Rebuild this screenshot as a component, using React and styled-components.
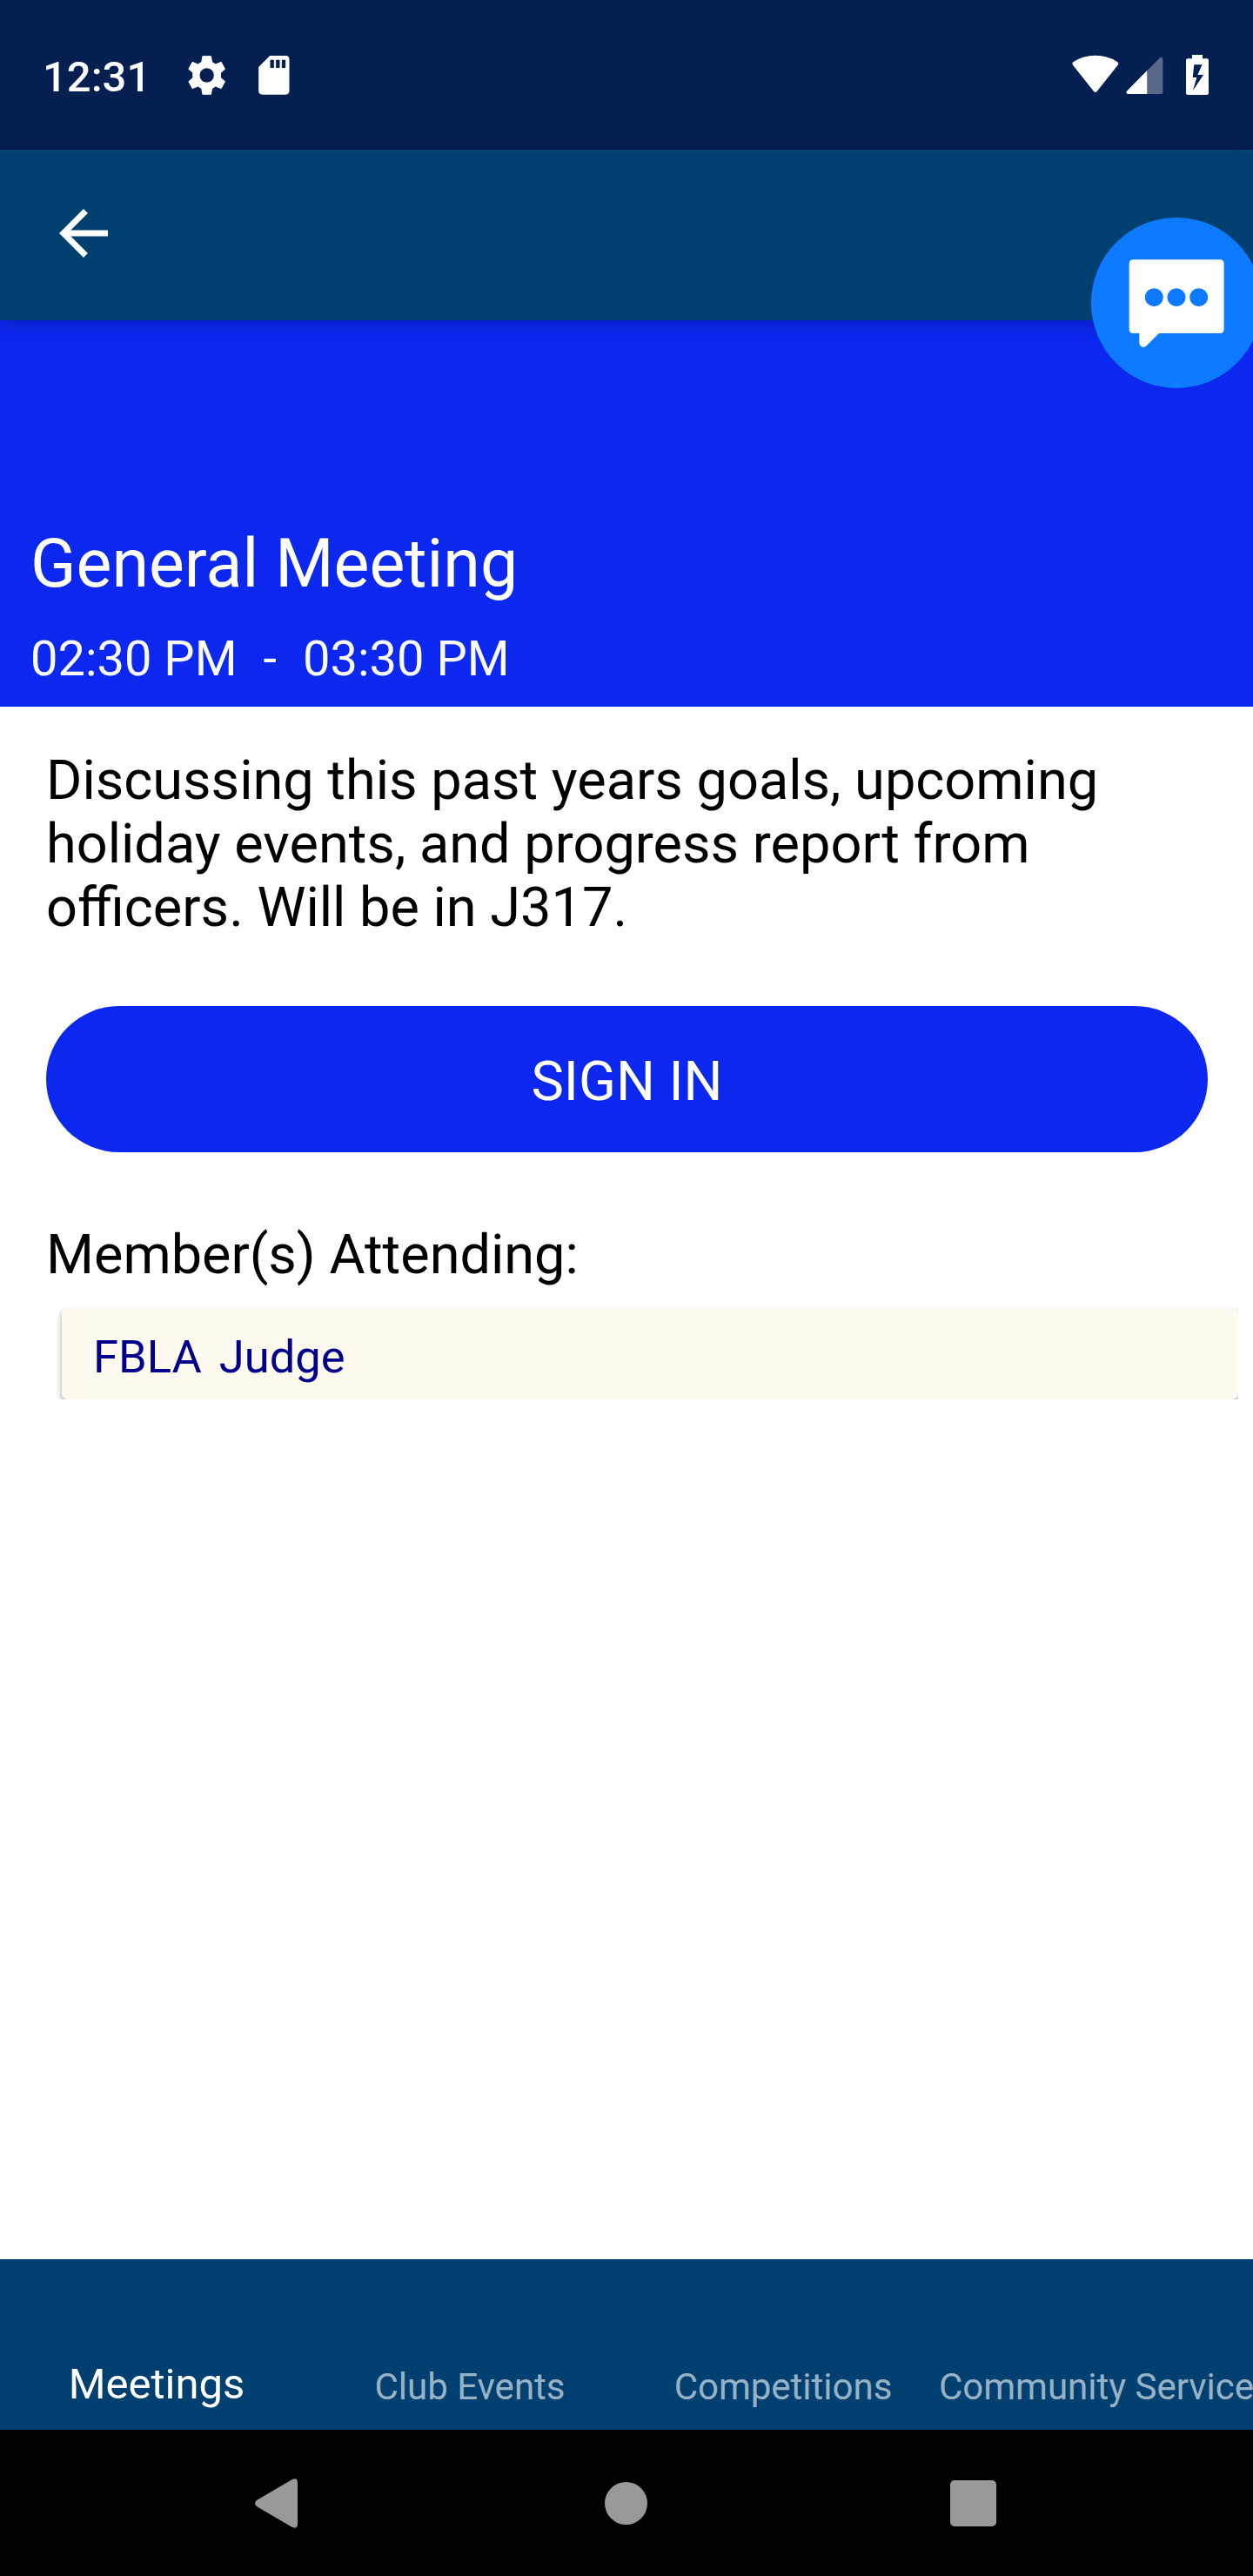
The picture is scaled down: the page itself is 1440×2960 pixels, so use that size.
import React from 'react';
import styled, { createGlobalStyle } from 'styled-components';

const GlobalStyle = createGlobalStyle`
  * { box-sizing: border-box; }
  body { margin: 0; background: #fff; }
  button { border: 0; padding: 0; background: none; font: inherit; color: inherit; }
`;

const Screen = styled.div`
  position: relative;
  display: flex;
  flex-direction: column;
  width: 1440px;
  height: 2960px;
  overflow: hidden;
  background: #fff;
  font-family: Roboto, 'Noto Sans', sans-serif;
  color: #000;
`;

const Icon = styled.svg`
  display: block;
  flex: none;
  width: ${(p) => p.$w}px;
  height: ${(p) => p.$h}px;
`;

const StatusBar = styled.div`
  flex: none;
  display: flex;
  align-items: center;
  justify-content: space-between;
  height: 172px;
  padding: 0 51px 0 49px;
  background: #051f50;
  color: #fff;
`;

const StatusGroup = styled.div`
  display: flex;
  align-items: center;
`;

const Clock = styled.span`
  width: 167px;
  font-size: 49px;
  font-weight: 500;
  line-height: 58px;
  padding-top: 5px;
`;

const StatusIcon = styled(Icon)`
  margin-left: ${(p) => p.$gap || 0}px;
`;

const Toolbar = styled.header`
  flex: none;
  position: relative;
  z-index: 1;
  display: flex;
  align-items: center;
  height: 196px;
  padding: 0 54px 4px;
  background: #004071;
  box-shadow: 0 4px 22px rgba(0, 0, 0, 0.2);
`;

const ChatBubble = styled.button`
  position: absolute;
  z-index: 2;
  top: 250px;
  right: -10px;
  display: flex;
  justify-content: center;
  width: 196px;
  height: 196px;
  padding-top: 48px;
  border-radius: 50%;
  background: #0e7aff;
`;

const Hero = styled.section`
  flex: none;
  display: flex;
  flex-direction: column;
  justify-content: flex-end;
  gap: 31px;
  height: 444px;
  padding: 0 35px 22px;
  background: #0c27ee;
  color: #fff;
`;

const Title = styled.h1`
  margin: 0;
  font-size: 77.1px;
  font-weight: 400;
  line-height: 90px;
`;

const Time = styled.div`
  display: flex;
  gap: 30px;
  font-size: 56px;
  line-height: 66px;
  color: #f8f8ff;
`;

const Content = styled.main`
  flex: 1;
  display: flex;
  flex-direction: column;
  padding: 48px 17px 0 53px;
`;

const Description = styled.p`
  width: 1335px;
  margin: 0;
  font-size: 63.07px;
  line-height: 73px;
`;

const SignIn = styled.button`
  flex: none;
  width: 1335px;
  height: 168px;
  margin-top: 77px;
  padding-top: 5px;
  border-radius: 84px;
  background: #0c27ee;
  color: #fff;
  font-size: 63px;
  line-height: 74px;
`;

const SectionTitle = styled.h2`
  margin: 81px 0 0;
  font-size: 63px;
  font-weight: 400;
  line-height: 74px;
`;

const MemberList = styled.div`
  margin-top: 24px;
  padding-left: 18px;
  overflow: hidden;
`;

const MemberCard = styled.div`
  display: flex;
  gap: 20px;
  height: 105px;
  padding: 25px 36px 0;
  border-radius: 7px;
  background: #fffaf0;
  box-shadow: 0 3px 7px rgba(0, 0, 0, 0.35);
  color: #00008b;
  font-size: 52.5px;
  line-height: 62px;
`;

const Tabs = styled.nav`
  flex: none;
  display: grid;
  grid-template-columns: repeat(4, 360px);
  align-items: end;
  height: 196px;
  padding-bottom: 23px;
  background: #004071;
`;

const Tab = styled.button`
  display: flex;
  justify-content: center;
  font-size: ${(p) => (p.$active ? 49 : 42)}px;
  line-height: ${(p) => (p.$active ? 58 : 53)}px;
  color: ${(p) => (p.$active ? '#fff' : 'rgba(255, 255, 255, 0.6)')};
  white-space: nowrap;
`;

const SystemNav = styled.div`
  flex: none;
  display: flex;
  align-items: center;
  height: 168px;
  padding-left: 293px;
  background: #000;
`;

const NavIcon = styled(Icon)`
  margin-right: ${(p) => p.$after || 0}px;
`;

const tabs = ['Meetings', 'Club Events', 'Competitions', 'Community Service'];

export default function App() {
  return (
    <Screen>
      <GlobalStyle />
      <StatusBar>
        <StatusGroup>
          <Clock>12:31</Clock>
          <StatusIcon $w={43} $h={45} viewBox="647.5 192 129 135">
            <path
              fill="#fff"
              fillRule="evenodd"
              stroke="#fff"
              strokeWidth="3"
              strokeLinejoin="round"
              d="M698 194h29l3 20 13 8 19-8 13 24-15 13v17l15 13-13 24-19-8-13 8-3 20h-29l-3-20-13-8-19 8-13-24 15-13v-17l-15-13 13-24 19 8 13-8zM712.500 233.500a26 26 0 1 0 0 52a26 26 0 1 0 0-52z"
            />
          </StatusIcon>
          <StatusIcon $gap={37.5} $w={36} $h={45} viewBox="889.500 192 108 135">
            <path
              fill="#fff"
              fillRule="evenodd"
              d="M929 192h54q13 0 13 13v108q0 13-13 13h-80q-13 0-13-13v-82zM930 206v28h13v-28zM950 206v28h13v-28zM970 206v28h13v-28z"
            />
          </StatusIcon>
        </StatusGroup>
        <StatusGroup>
          <StatusIcon $w={54} $h={46} viewBox="155 189 162 138">
            <path
              fill="#fff"
              d="M158 224q-4-6 1-10q32-23 76.500-23t76.500 23q5 4 1 10l-72 91q-5.500 6-11 0z"
            />
          </StatusIcon>
          <StatusIcon $gap={8} $w={43} $h={46} viewBox="341 189 129 138">
            <path fill="#596788" d="M414 243l43-43q4-4 8-2q3 2 3 6v114q0 6-6 6h-48z" />
            <path fill="#fff" d="M414 243v81h-66q-6 0-6-5q0-3 3-6z" />
          </StatusIcon>
          <StatusIcon $gap={26} $w={26} $h={46} viewBox="549 189 78 138">
            <path
              fill="#fff"
              fillRule="evenodd"
              d="M570 189h36v13h15q6 0 6 6v113q0 6-6 6h-66q-6 0-6-6v-113q0-6 6-6h15zM577 223l-5 44h14l-13 45 36-54h-20l16-35z"
            />
          </StatusIcon>
        </StatusGroup>
      </StatusBar>

      <Toolbar>
        <Icon $w={84} $h={84} viewBox="0 0 24 24">
          <path
            fill="#fff"
            d="M20 11H7.830l5.590-5.590L12 4l-8 8 8 8 1.410-1.410L7.830 13H20z"
          />
        </Icon>
      </Toolbar>

      <Hero>
        <Title>General Meeting</Title>
        <Time>
          <span>02:30 PM</span>
          <span>-</span>
          <span>03:30 PM</span>
        </Time>
      </Hero>

      <Content>
        <Description>
          Discussing this past years goals, upcoming holiday events, and progress report from
          officers. Will be in J317.
        </Description>
        <SignIn>SIGN IN</SignIn>
        <SectionTitle>Member(s) Attending:</SectionTitle>
        <MemberList>
          <MemberCard>
            <span>FBLA</span>
            <span>Judge</span>
          </MemberCard>
        </MemberList>
      </Content>

      <Tabs>
        {tabs.map((name, i) => (
          <Tab key={name} $active={i === 0}>
            {name}
          </Tab>
        ))}
      </Tabs>

      <SystemNav>
        <NavIcon $w={49} $h={57} $after={353} viewBox="0 0 49 57">
          <path fill="#999" d="M2 25L42 1.500Q49-2 49 5V52Q49 59 42 55.500L2 32Q-2 28.500 2 25z" />
        </NavIcon>
        <NavIcon $w={49} $h={49} $after={347.5} viewBox="0 0 49 49">
          <circle cx="24.500" cy="24.500" r="24.500" fill="#999" />
        </NavIcon>
        <NavIcon $w={53} $h={53} viewBox="0 0 53 53">
          <rect width="53" height="53" rx="5" fill="#999" />
        </NavIcon>
      </SystemNav>

      <ChatBubble aria-label="Chat">
        <Icon $w={110} $h={102} viewBox="352 893 330 306">
          <path
            fill="#fff"
            d="M368 894h299q14 0 14 14v226q0 14-14 14H457l-43 43q-8 8-17 3q-8-4-8-13v-33h-21q-14 0-14-14V908q0-14 14-14z"
          />
          <circle cx="440" cy="1024" r="31.500" fill="#0e7aff" />
          <circle cx="517" cy="1024" r="31.500" fill="#0e7aff" />
          <circle cx="594" cy="1024" r="31.500" fill="#0e7aff" />
        </Icon>
      </ChatBubble>
    </Screen>
  );
}
